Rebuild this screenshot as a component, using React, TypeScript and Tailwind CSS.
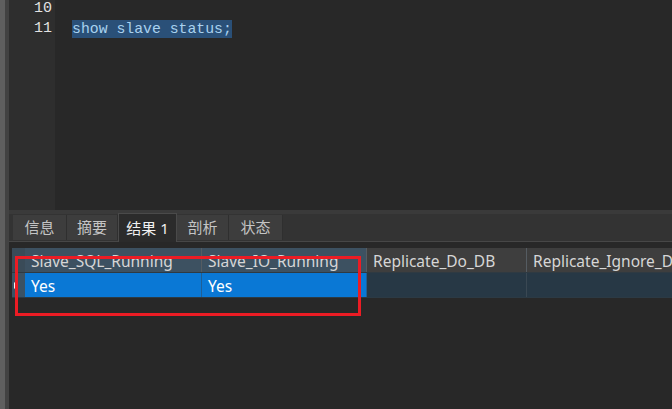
import React from "react";

const tabs = [
  { label: "信息", w: "w-[54px]" },
  { label: "摘要", w: "w-[51px]" },
  { label: "结果 1", w: "w-[59px]", active: true },
  { label: "剖析", w: "w-[52px]" },
  { label: "状态", w: "w-[54px]" },
];

const columns = [
  { name: "Slave_SQL_Running", value: "Yes", w: "w-[177px]", selected: true },
  { name: "Slave_IO_Running", value: "Yes", w: "w-[165px]", selected: true },
  { name: "Replicate_Do_DB", value: "", w: "w-[160px]" },
  { name: "Replicate_Ignore_DB", value: "", w: "w-[160px]" },
];

const mono = { fontFamily: '"Liberation Mono", "DejaVu Sans Mono", monospace' };
const ui = { fontFamily: '"Noto Sans", "Noto Sans CJK SC", sans-serif' };

export default function App() {
  return (
    <div className="relative flex h-[409px] w-[672px] overflow-hidden bg-[#282828]">
      {/* window edge */}
      <div className="w-[5px] shrink-0 bg-[#5f5f5f]" />
      <div className="w-[4px] shrink-0 bg-[#424242]" />

      <div className="flex min-w-0 flex-1 flex-col">
        {/* editor */}
        <div className="flex h-[210px] shrink-0 overflow-hidden">
          <div className="w-[46px] shrink-0 bg-[#2e2e2e]">
            <div className="-mt-px text-right text-[15px] leading-[20px] text-[#e2e2e2]" style={mono}>
              <div className="pr-[3px]">10</div>
              <div className="pr-[3px]">11</div>
            </div>
          </div>
          <div className="flex-1 bg-[#282828] pl-[17px]">
            <div className="-mt-px text-[14.8px] leading-[20px] text-[#a9d2ef]" style={mono}>
              <div>&nbsp;</div>
              <div>
                <span className="bg-[#2a5078] py-px">show slave status;</span>
              </div>
            </div>
          </div>
        </div>

        {/* splitter */}
        <div className="h-[4px] shrink-0 bg-[#3a3a3a]" />

        {/* tabs */}
        <div className="flex h-[28px] shrink-0 items-end border-b border-[#474747] bg-[#333333] pl-[4px]" style={ui}>
          {tabs.map((t) =>
            t.active ? (
              <div
                key={t.label}
                className={`${t.w} -mb-px flex h-[29px] items-center justify-center border border-b-0 border-[#4a4a4a] bg-[#2b2b2b] text-[15px] text-[#f0f0f0]`}
              >
                {t.label}
              </div>
            ) : (
              <div
                key={t.label}
                className={`${t.w} mb-px flex h-[25px] items-center justify-center border-r border-[#2f2f2f] bg-[#3d3d3d] text-[15px] text-[#c4c4c4]`}
              >
                {t.label}
              </div>
            )
          )}
        </div>

        {/* grid */}
        <div className="flex flex-1 flex-col overflow-hidden bg-[#282828] pl-[3px] pt-[6px]" style={ui}>
          <div className="flex h-[25px] border-b border-[#2f3a42]">
            <div className="w-[13px] shrink-0 bg-[#3a4b58]" />
            {columns.map((c) => (
              <div
                key={c.name}
                className={`${c.w} shrink-0 overflow-hidden whitespace-nowrap border-r border-[#555c62] px-[6px] pt-px text-[15.5px] leading-[24px] text-[#d6d6d6] ${
                  c.selected ? "bg-[#3d5161]" : "bg-[#3e3e3e]"
                }`}
              >
                {c.name}
              </div>
            ))}
          </div>
          <div className="flex h-[25px] border-b border-[#2c3a44]">
            <div className="relative flex w-[13px] shrink-0 items-center bg-[#3b5264] pl-[2px]">
              <svg width="4" height="7" viewBox="0 0 4 7">
                <path d="M0 0 L4 3.5 L0 7 Z" fill="#f2f2f2" />
              </svg>
            </div>
            {columns.map((c) => (
              <div
                key={c.name}
                className={`${c.w} shrink-0 border-r px-[6px] pt-px text-[15.5px] leading-[24px] text-white ${
                  c.selected ? "border-[#1f5f96] bg-[#0a78d5]" : "border-[#3a4853] bg-[#273845]"
                }`}
              >
                {c.value}
              </div>
            ))}
          </div>
        </div>
      </div>

      {/* red highlight annotation */}
      <div className="pointer-events-none absolute left-[15px] top-[256px] h-[60px] w-[346px] border-[3px] border-[#ec1c24]" />
    </div>
  );
}
